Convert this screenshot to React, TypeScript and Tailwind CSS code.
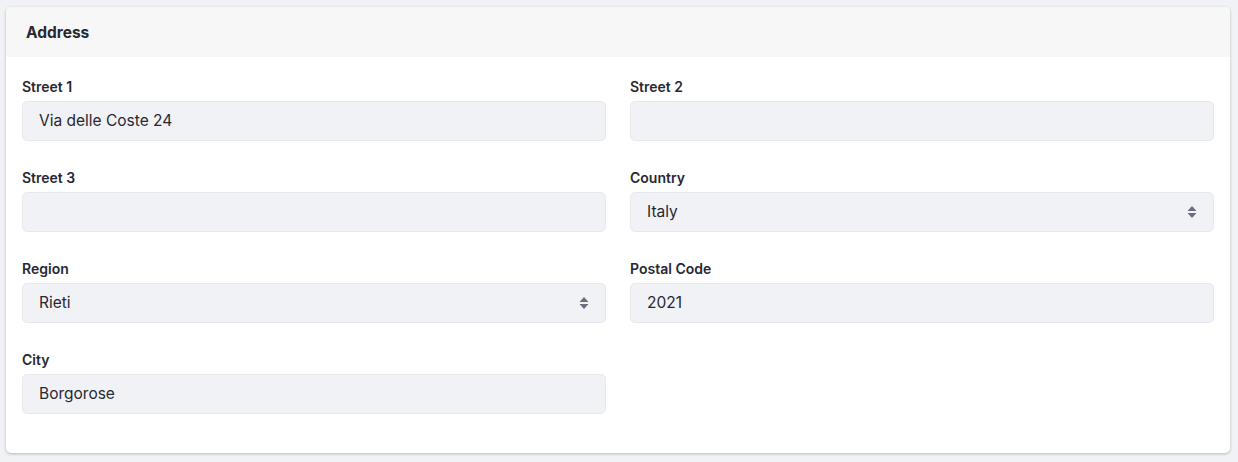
import React from 'react';

const Arrows = () => (
  <svg width="10" height="14" viewBox="0 0 10 14" className="text-[#6b6c7e]">
    <path d="M5 1 L9.5 6 H0.5 Z" fill="currentColor" />
    <path d="M5 13 L9.5 8 H0.5 Z" fill="currentColor" />
  </svg>
);

type FieldProps = { label: string; value?: string; select?: boolean };

const Field: React.FC<FieldProps> = ({ label, value = '', select }) => (
  <div className="mb-[27px]">
    <div className="h-5 leading-5 mb-1 text-[14px] font-semibold text-[#272833]">{label}</div>
    <div className="h-10 rounded-[5px] bg-[#f1f2f5] border border-[#e7e7ed] flex items-center justify-between pl-4 pr-4 text-[15.5px] text-[#272833]">
      <span>{value}</span>
      {select && <Arrows />}
    </div>
  </div>
);

export default function App() {
  return (
    <div className="min-h-screen bg-[#f1f2f5] pl-[6px] pr-[8px] pt-[7px] pb-[8px]" style={{ fontFamily: 'Inter, "Noto Sans", sans-serif' }}>
      <div className="bg-white rounded-[5px] shadow-[0_1px_3px_rgba(0,0,0,0.25)] overflow-hidden">
        <div className="h-[50px] bg-[#f7f7f7] flex items-center pl-5 pt-[2px] text-[15.5px] font-bold text-[#272833]">Address</div>
        <div className="px-4 pt-5 pb-3 grid grid-cols-2 gap-x-6">
          <Field label="Street 1" value="Via delle Coste 24" />
          <Field label="Street 2" />
          <Field label="Street 3" />
          <Field label="Country" value="Italy" select />
          <Field label="Region" value="Rieti" select />
          <Field label="Postal Code" value="2021" />
          <Field label="City" value="Borgorose" />
        </div>
      </div>
    </div>
  );
}
